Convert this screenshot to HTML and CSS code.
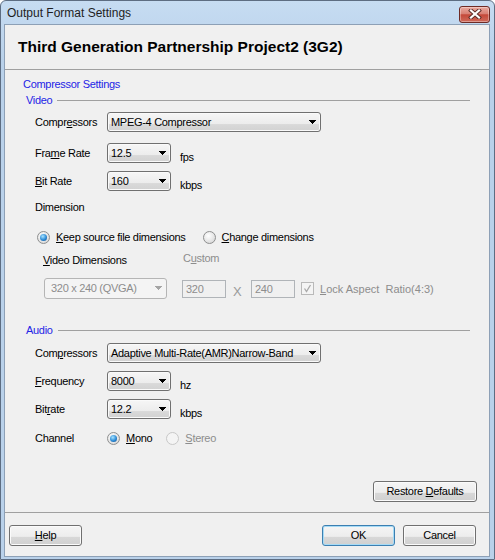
FILE: index.html
```html
<!DOCTYPE html>
<html lang="en">
<head>
    <meta charset="UTF-8">
    <title>Output Format Settings</title>
    <link rel="stylesheet" href="styles.css">
</head>
<body>
<div class="window">
    <div class="titlebar">
        <span class="title">Output Format Settings</span>
        <button class="close">
            <svg width="14" height="10" viewBox="0 0 14 10"><path d="M3 1.5 L11 8.5 M11 1.5 L3 8.5" stroke="#5a2a26" stroke-width="4" stroke-linecap="square"/><path d="M3 1.5 L11 8.5 M11 1.5 L3 8.5" stroke="#fff" stroke-width="2.2" stroke-linecap="square"/></svg>
        </button>
    </div>
    <div class="client">
        <div class="header">Third Generation Partnership Project2 (3G2)</div>
        <div class="main">
            <div class="section-title">Compressor Settings</div>

            <div class="legend"><span>Video</span><span class="rule"></span></div>
            <div class="row first">
                <span class="lbl">Compr<u>e</u>ssors</span>
                <div class="combo wide"><span>MPEG-4 Compressor</span><svg class="arrow" width="7" height="4" viewBox="0 0 7 4"><path d="M0 0h7v1h-1v1h-1v1h-1v1h-1v-1h-1v-1h-1v-1h-1z"/></svg></div>
            </div>
            <div class="row gap11">
                <span class="lbl">Fra<u>m</u>e Rate</span>
                <div class="combo small"><span>12.5</span><svg class="arrow" width="7" height="4" viewBox="0 0 7 4"><path d="M0 0h7v1h-1v1h-1v1h-1v1h-1v-1h-1v-1h-1v-1h-1z"/></svg></div>
                <span class="unit">fps</span>
            </div>
            <div class="row gap8">
                <span class="lbl"><u>B</u>it Rate</span>
                <div class="combo small"><span>160</span><svg class="arrow" width="7" height="4" viewBox="0 0 7 4"><path d="M0 0h7v1h-1v1h-1v1h-1v1h-1v-1h-1v-1h-1v-1h-1z"/></svg></div>
                <span class="unit">kbps</span>
            </div>
            <div class="row text-row gap8">Dimension</div>
            <div class="row text-row radios">
                <span class="radio on"></span><span class="opt"><u>K</u>eep source file dimensions</span>
                <span class="radio second"></span><span class="opt"><u>C</u>hange dimensions</span>
            </div>
            <div class="row dim-head">
                <span class="vd"><u>V</u>ideo Dimensions</span>
                <span class="custom muted">C<u>u</u>stom</span>
            </div>
            <div class="row dim-ctrls">
                <div class="combo disabled"><span>320 x 240 (QVGA)</span><svg class="arrow" width="7" height="4" viewBox="0 0 7 4"><path d="M0 0h7v1h-1v1h-1v1h-1v1h-1v-1h-1v-1h-1v-1h-1z"/></svg></div>
                <div class="field">320</div>
                <span class="times muted">X</span>
                <div class="field">240</div>
                <span class="check"><svg width="11" height="11" viewBox="0 0 11 11"><path d="M2.5 5.5 L4.5 8.5 L8.5 2" fill="none" stroke="#a9a9a9" stroke-width="1.3"/></svg></span>
                <span class="check-label muted"><u>L</u>ock Aspect&nbsp; Ratio(4:3)</span>
            </div>

            <div class="legend audio"><span>Audio</span><span class="rule"></span></div>
            <div class="row gap5">
                <span class="lbl">Com<u>p</u>ressors</span>
                <div class="combo wide"><span>Adaptive Multi-Rate(AMR)Narrow-Band</span><svg class="arrow" width="7" height="4" viewBox="0 0 7 4"><path d="M0 0h7v1h-1v1h-1v1h-1v1h-1v-1h-1v-1h-1v-1h-1z"/></svg></div>
            </div>
            <div class="row gap8">
                <span class="lbl"><u>F</u>requency</span>
                <div class="combo small"><span>8000</span><svg class="arrow" width="7" height="4" viewBox="0 0 7 4"><path d="M0 0h7v1h-1v1h-1v1h-1v1h-1v-1h-1v-1h-1v-1h-1z"/></svg></div>
                <span class="unit">hz</span>
            </div>
            <div class="row gap8">
                <span class="lbl">Bit<u>r</u>ate</span>
                <div class="combo small"><span>12.2</span><svg class="arrow" width="7" height="4" viewBox="0 0 7 4"><path d="M0 0h7v1h-1v1h-1v1h-1v1h-1v-1h-1v-1h-1v-1h-1z"/></svg></div>
                <span class="unit">kbps</span>
            </div>
            <div class="row text-row channel">
                <span class="lbl">Channel</span>
                <span class="radio on"></span><span class="opt"><u>M</u>ono</span>
                <span class="radio off stereo"></span><span class="opt muted"><u>S</u>tereo</span>
            </div>

            <div class="restore-row"><button class="btn restore">Restore <u>D</u>efaults</button></div>
        </div>
        <div class="footer">
            <button class="btn"><u>H</u>elp</button>
            <button class="btn default">OK</button>
            <button class="btn">Cancel</button>
        </div>
    </div>
</div>
</body>
</html>
```

FILE: styles.css
```css
body {
    margin: 0;
    font-family: "Liberation Sans", Arial, sans-serif;
    font-size: 11px;
    color: #000;
    background: #fff;
}
.window {
    width: 495px;
    height: 560px;
    box-sizing: border-box;
    border: 1px solid #5d6d82;
    border-radius: 6px 6px 0 0;
    background: linear-gradient(#c6dcf2, #b9d1ea 60px, #b9d1ea);
    padding: 0 4px 2px 3px;
    display: flex;
    flex-direction: column;
}
.titlebar {
    height: 23px;
    display: flex;
    align-items: center;
    justify-content: space-between;
    padding-left: 3px;
}
.title {
    font-size: 12px;
    color: #1e1e1e;
}
.close {
    width: 31px;
    height: 17px;
    margin-top: 3px;
    padding: 0;
    border: 1px solid #6e2b25;
    border-radius: 3px;
    background: linear-gradient(#e9a99f, #d88074 45%, #c4493a 52%, #cf6a5a);
    box-shadow: inset 0 0 0 1px rgba(255, 255, 255, 0.35);
    display: flex;
    align-items: center;
    justify-content: center;
}
.client {
    flex: 1;
    background: #f0f0f0;
    border: 1px solid #8da0b6;
    display: flex;
    flex-direction: column;
    letter-spacing: -0.3px;
}
.header {
    height: 44px;
    padding-left: 13px;
    display: flex;
    align-items: center;
    font-weight: bold;
    font-size: 15.5px;
    letter-spacing: 0;
    border-bottom: 1px solid #a0a0a0;
}
.main {
    flex: 1;
    display: flex;
    flex-direction: column;
}
u {
    text-decoration-thickness: 1px;
    text-underline-offset: 1px;
}
.section-title {
    margin: 6px 0 0 18px;
    height: 16px;
    line-height: 16px;
    color: #2424e6;
}
.legend {
    height: 16px;
    margin: 0 19px 0 21px;
    display: flex;
    align-items: center;
    color: #2424e6;
}
.legend.audio {
    margin-top: 23px;
}
.rule {
    flex: 1;
    margin-left: 5px;
    border-top: 1px solid #a0a0a0;
}
.row {
    display: flex;
    align-items: center;
    height: 20px;
    padding-left: 30px;
}
.row.first { margin-top: 4px; }
.gap5 { margin-top: 5px; }
.gap8 { margin-top: 8px; }
.gap11 { margin-top: 11px; }
.text-row { height: 16px; }
.lbl { width: 72px; }
.unit {
    margin-left: 9px;
    padding-top: 8px;
}
.muted { color: #8d8d8d; }

.combo {
    height: 20px;
    box-sizing: border-box;
    border: 1px solid #707070;
    border-radius: 3px;
    background: linear-gradient(#f6f6f6, #ececec 62%, #d9d9d9 64%, #d2d2d2);
    box-shadow: inset 0 0 0 1px #fafafa;
    display: flex;
    align-items: center;
    justify-content: space-between;
    padding: 0 4px 1px 3px;
}
.combo.wide { width: 214px; }
.combo.small { width: 64px; }
.combo.disabled {
    width: 123px;
    height: 21px;
    border-color: #b5b5b5;
    background: #f4f4f4;
    box-shadow: none;
    color: #8d8d8d;
    padding-left: 6px;
}
.arrow path { fill: #000; }
.combo.disabled .arrow path { fill: #a5a5a5; }

.radios {
    margin-top: 14px;
    padding-left: 32px;
}
.radio {
    width: 13px;
    height: 13px;
    box-sizing: border-box;
    border-radius: 50%;
    border: 1px solid #8e8f8f;
    background: radial-gradient(circle at 40% 35%, #ffffff, #e3e3e3 60%, #cdcdcd);
    display: flex;
    align-items: center;
    justify-content: center;
}
.radio.on::after {
    content: "";
    width: 7px;
    height: 7px;
    border-radius: 50%;
    background: radial-gradient(circle at 40% 35%, #a8e4ff, #2d8bd6 55%, #0b4685);
}
.radio.off {
    border-color: #c8c8c8;
    background: #f4f4f4;
}
.opt { margin-left: 6px; }
.radio.second { margin-left: 17px; }

.dim-head {
    margin-top: 6px;
    height: 17px;
    padding-left: 38px;
}
.vd { width: 140px; }
.custom { margin-bottom: 4px; }
.dim-ctrls {
    margin-top: 10px;
    height: 21px;
    padding-left: 39px;
}
.field {
    width: 44px;
    height: 18px;
    box-sizing: border-box;
    border: 1px solid #b0b4b8;
    background: #f0f0f0;
    color: #8d8d8d;
    padding: 1px 0 0 3px;
    display: flex;
    align-items: center;
}
.dim-ctrls .field:nth-child(2) { margin-left: 15px; }
.times {
    width: 8px;
    margin: 5px 10px 0 7px;
    font-size: 13px;
    color: #9a9a9a;
}
.check {
    width: 13px;
    height: 13px;
    box-sizing: border-box;
    border: 1px solid #b9b9b9;
    background: #f4f4f4;
    margin-left: 6px;
    display: flex;
    align-items: center;
    justify-content: center;
}
.check-label {
    margin-left: 6px;
    letter-spacing: 0;
}

.channel { margin-top: 11px; }
.radio.stereo { margin-left: 14px; }

.restore-row {
    margin-top: auto;
    margin-bottom: 10px;
    padding-right: 12px;
    display: flex;
    justify-content: flex-end;
}
.btn {
    width: 73px;
    height: 21px;
    box-sizing: border-box;
    padding: 0 0 1px;
    border: 1px solid #707070;
    border-radius: 3px;
    background: linear-gradient(#f5f5f5, #ededed 55%, #d8d8d8 57%, #d0d0d0);
    box-shadow: inset 0 0 0 1px #fbfbfb;
    font: inherit;
    letter-spacing: inherit;
    color: #000;
}
.btn.restore { width: 104px; }
.btn.default {
    margin-left: auto;
    border-color: #3c7fb1;
    box-shadow: inset 0 0 0 1px #a6dbf6;
}
.footer {
    border-top: 1px solid #a0a0a0;
    padding: 12px 13px 0 4px;
    height: 44px;
    box-sizing: border-box;
    display: flex;
    gap: 8px;
}
```
